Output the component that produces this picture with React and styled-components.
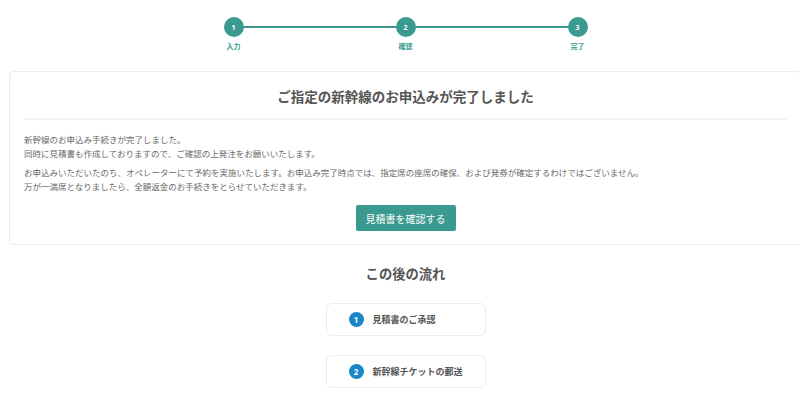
import React from 'react';
import styled, { createGlobalStyle } from 'styled-components';

const COLORS = {
  teal: '#3a9a8f',
  blue: '#1b86c7',
  title: '#555555',
  text: '#6a6a6a',
  border: '#ececec',
};

const FONT = '"Noto Sans CJK JP", "Noto Sans", sans-serif';

const GlobalStyle = createGlobalStyle`
  html, body {
    margin: 0;
    padding: 0;
    background: #ffffff;
    overflow: hidden;
    font-family: ${FONT};
  }
`;

const STEPS = ['入力', '確認', '完了'];
const FLOW = ['見積書のご承認', '新幹線チケットの郵送'];

const App = () => {
  return (
    <>
      <GlobalStyle />
      <Page>
        <StepBar>
          {STEPS.map((label, i) => (
            <Step key={label}>
              <StepCircle>{i + 1}</StepCircle>
              <StepLabel>{label}</StepLabel>
            </Step>
          ))}
        </StepBar>

        <Card>
          <CardTitle>ご指定の新幹線のお申込みが完了しました</CardTitle>
          <Divider />
          <Paragraph>
            新幹線のお申込み手続きが完了しました。
            <br />
            同時に見積書も作成しておりますので、ご確認の上発注をお願いいたします。
          </Paragraph>
          <Paragraph>
            お申込みいただいたのち、オペレーターにて予約を実施いたします。お申込み完了時点では、指定席の座席の確保、および発券が確定するわけではございません。
            <br />
            万が一満席となりましたら、全額返金のお手続きをとらせていただきます。
          </Paragraph>
          <ButtonRow>
            <PrimaryButton type="button">見積書を確認する</PrimaryButton>
          </ButtonRow>
        </Card>

        <SectionTitle>この後の流れ</SectionTitle>
        <FlowList>
          {FLOW.map((text, i) => (
            <FlowItem key={text}>
              <FlowNumber>{i + 1}</FlowNumber>
              <FlowText>{text}</FlowText>
            </FlowItem>
          ))}
        </FlowList>
      </Page>
    </>
  );
};

const Page = styled.div`
  width: 793px;
  margin-left: 9px;
  display: flex;
  flex-direction: column;
  align-items: center;
`;

const StepBar = styled.div`
  position: relative;
  width: 364px;
  margin-top: 17px;
  display: flex;
  justify-content: space-between;

  &::before {
    content: '';
    position: absolute;
    left: 10px;
    right: 10px;
    top: 9px;
    height: 2px;
    background: ${COLORS.teal};
  }
`;

const Step = styled.div`
  position: relative;
  width: 20px;
  display: flex;
  flex-direction: column;
  align-items: center;
`;

const StepCircle = styled.div`
  width: 20px;
  height: 20px;
  border-radius: 50%;
  background: ${COLORS.teal};
  color: #ffffff;
  font-family: 'Open Sans', sans-serif;
  font-size: 7px;
  font-weight: 700;
  display: flex;
  align-items: center;
  justify-content: center;
`;

const StepLabel = styled.div`
  margin-top: 4px;
  white-space: nowrap;
  font-size: 7px;
  line-height: 10px;
  font-weight: 700;
  color: ${COLORS.teal};
`;

const Card = styled.div`
  align-self: stretch;
  margin-top: 20px;
  padding: 14px 14px 13px;
  border: 1px solid ${COLORS.border};
  border-radius: 4px;
  display: flex;
  flex-direction: column;
`;

const CardTitle = styled.h1`
  margin: 0;
  text-align: center;
  font-size: 13.5px;
  line-height: 20px;
  font-weight: 700;
  color: ${COLORS.title};
`;

const Divider = styled.hr`
  margin: 12px 0 12px;
  border: 0;
  height: 2px;
  background: #f3f3f3;
`;

const Paragraph = styled.p`
  margin: 0 0 5px;
  font-size: 8.5px;
  line-height: 14px;
  color: ${COLORS.text};
`;

const ButtonRow = styled.div`
  display: flex;
  justify-content: center;
  margin-top: 7px;
`;

const PrimaryButton = styled.button`
  height: 26px;
  padding: 0 10px;
  border: 0;
  border-radius: 2px;
  background: ${COLORS.teal};
  color: #ffffff;
  font-family: ${FONT};
  font-size: 10px;
  cursor: pointer;
`;

const SectionTitle = styled.h2`
  margin: 19px 0 0;
  font-size: 13.3px;
  line-height: 20px;
  font-weight: 700;
  color: ${COLORS.title};
`;

const FlowList = styled.div`
  margin-top: 19px;
  display: flex;
  flex-direction: column;
  gap: 19px;
`;

const FlowItem = styled.div`
  box-sizing: border-box;
  width: 160px;
  height: 33px;
  padding-left: 22px;
  border: 1px solid ${COLORS.border};
  border-radius: 6px;
  display: flex;
  align-items: center;
  gap: 9px;
`;

const FlowNumber = styled.div`
  width: 15px;
  height: 15px;
  border-radius: 50%;
  background: ${COLORS.blue};
  color: #ffffff;
  font-family: 'Open Sans', sans-serif;
  font-size: 8px;
  font-weight: 700;
  display: flex;
  align-items: center;
  justify-content: center;
`;

const FlowText = styled.span`
  font-size: 9px;
  font-weight: 700;
  color: ${COLORS.title};
`;

export default App;
